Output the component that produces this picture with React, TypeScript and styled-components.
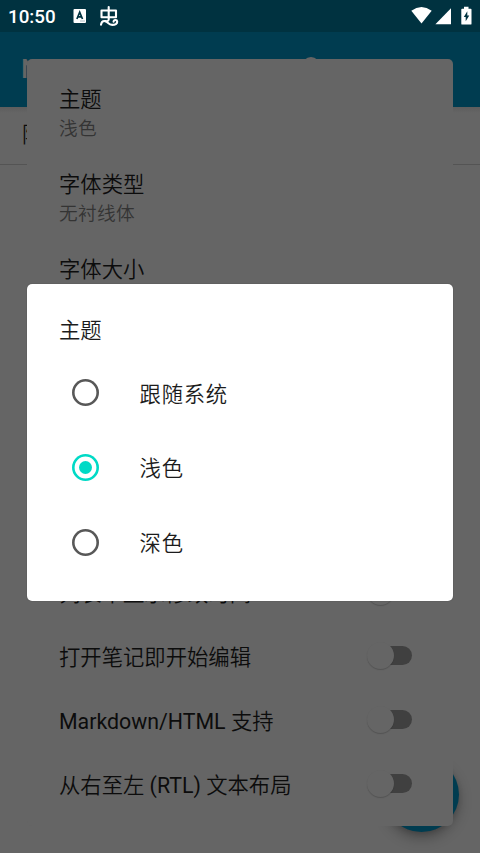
import React from 'react';
import styled, { createGlobalStyle } from 'styled-components';

const GlobalStyle = createGlobalStyle`
  * { box-sizing: border-box; }
  body { margin: 0; background: #656565; }
`;

const Screen = styled.div`
  position: relative;
  width: 480px;
  height: 853px;
  overflow: hidden;
  background: #656565;
  color: #0c0c0c;
  font-family: Roboto, 'Noto Sans CJK SC DemiLight', 'Noto Sans CJK SC', sans-serif;
  font-size: 21.33px;
`;

const StatusBar = styled.header`
  display: flex;
  align-items: center;
  height: 32px;
  padding: 0 8px 0 8px;
  background: #003240;
  color: #fff;
`;

const Clock = styled.span`
  width: 65px;
  font-size: 18.8px;
  font-weight: 500;
  line-height: 32px;
  padding-top: 1px;
`;

const StatusIcons = styled.svg`
  display: block;
  flex: none;
`;

const Spacer = styled.div`
  flex: 1;
`;

const AppBar = styled.div`
  height: 75px;
  padding: 19px 0 0 21px;
  background: #003c50;
  color: #656565;
  font-size: 26.6px;
  font-weight: 500;
  line-height: 36px;
  white-space: nowrap;
  display: flex;
`;

const AppTitle = styled.span`
  width: 274px;
`;

const SearchIcon = styled.svg`
  display: block;
  margin-top: 5px;
`;

const NoteRow = styled.div`
  height: 58px;
  padding: 11px 22px;
  border-bottom: 1px solid #545454;
  line-height: 34px;
  background: linear-gradient(#5d5d5d, #656565 6px);
`;

const Fab = styled.div`
  position: absolute;
  left: 384px;
  top: 757px;
  width: 75px;
  height: 75px;
  border-radius: 50%;
  background: #003c50;
  box-shadow: 0 6px 13px rgba(0, 0, 0, 0.28), 0 2px 5px rgba(0, 0, 0, 0.12);
`;

const Settings = styled.section`
  position: absolute;
  left: 27px;
  top: 59px;
  width: 426px;
  height: 767px;
  padding: 25px 40px 0 32px;
  border-radius: 5px;
  background: #656565;
  display: flex;
  flex-direction: column;
`;

const Preference = styled.div`
  height: 85.2px;
  flex: none;
`;

const PreferenceTitle = styled.div`
  line-height: 32px;
`;

const PreferenceValue = styled.div`
  color: #343434;
  font-size: 18.67px;
  letter-spacing: 0.33px;
  line-height: 27px;
`;

const Toggles = styled.div`
  margin-top: auto;
  padding-bottom: 8px;
`;

const ToggleRow = styled.div`
  display: flex;
  align-items: center;
  justify-content: space-between;
  height: 64px;
  line-height: 32px;
  white-space: nowrap;
`;

const Track = styled.div`
  display: flex;
  align-items: center;
  width: 37px;
  height: 19px;
  margin-right: 1px;
  margin-top: -5px;
  border-radius: 10px;
  background: #404040;
`;

const Thumb = styled.div`
  flex: none;
  width: 27px;
  height: 27px;
  margin-left: -8px;
  border-radius: 50%;
  background: #656565;
  box-shadow: 0 1px 1px rgba(0, 0, 0, 0.18);
`;

const Dialog = styled.section`
  position: absolute;
  left: 27px;
  top: 284px;
  width: 426px;
  height: 317px;
  padding: 31px 32px 0;
  border-radius: 5px;
  background: #fff;
  color: #1c1c1c;
  box-shadow: 0 0 1px #333;
`;

const DialogTitle = styled.h2`
  margin: 0 0 9px;
  font-size: 21.33px;
  font-weight: 400;
  line-height: 32px;
`;

const Option = styled.label`
  display: flex;
  align-items: center;
  height: 74.67px;
  padding-left: 12.6px;
  letter-spacing: 0.75px;
  gap: 41px;
`;

const Radio = styled.span<{ $on?: boolean }>`
  display: grid;
  place-items: center;
  width: 27px;
  height: 27px;
  margin-top: -1px;
  border-radius: 50%;
  box-shadow: inset 0 0 0 2.6px ${(p) => (p.$on ? '#00dac6' : '#585858')};

  &::after {
    content: '';
    width: 13px;
    height: 13px;
    border-radius: 50%;
    background: ${(p) => (p.$on ? '#00dac6' : 'transparent')};
  }
`;

const OptionText = styled.span`
  line-height: 32px;
  padding-top: 3px;
`;

const preferences = [
  { title: '主题', value: '浅色' },
  { title: '字体类型', value: '无衬线体' },
  { title: '字体大小', value: '' },
];

const toggles = [
  '列表中显示修改时间',
  '打开笔记即开始编辑',
  'Markdown/HTML 支持',
  '从右至左 (RTL) 文本布局',
];

const themes = ['跟随系统', '浅色', '深色'];

export default function App() {
  return (
    <>
      <GlobalStyle />
      <Screen>
        <StatusBar>
          <Clock>10:50</Clock>
          <StatusIcons width="48" height="32" viewBox="0 0 48 32">
            <rect x="0.5" y="9" width="12.5" height="14" rx="1" fill="#fff" />
            <path d="M3.9 19 6.7 12.2 9.5 19M5 16.8h3.5" fill="none" stroke="#003240" strokeWidth="1.7" />
            <path d="M7 21h5" stroke="#8aa2a9" strokeWidth="0.7" />
            <g fill="none" stroke="#fff" strokeWidth="2.1" strokeLinecap="round" strokeLinejoin="round">
              <path d="M28.5 10.500H43v6.700H28.500z" />
              <path d="M35.700 7v12.500c-.2 2.500-2.500 1.500-4.500 1.500-2 0-2.800 1.500-3.200 3.600" />
              <path d="M32 21.200c2.500 0 3.300 3.700 7.200 3.700 3 0 5.200-1.200 5-3.400-.2-2.100-3.800-1.800-3.600.2" />
            </g>
          </StatusIcons>
          <Spacer />
          <StatusIcons width="62" height="32" viewBox="410 0 62 32">
            <path d="M411.300 10.700Q421.500 3.500 431.700 10.700L421.500 23.500z" fill="#fff" />
            <path d="M451 8.300V24.300H435.400z" fill="#fff" />
            <path d="M464 6.800h4.500v1.900h2.200q.8 0 .8.800v14.200q0 .9-.8.900h-8.600q-.8 0-.8-.9V9.500q0-.8.8-.8h1.900z" fill="#fff" />
            <path d="M467.300 11.300 463.800 16.900h1.900V21.300L469.300 15.500h-2z" fill="#003240" />
          </StatusIcons>
        </StatusBar>
        <AppBar>
          <AppTitle>Notepad</AppTitle>
          <SearchIcon width="32" height="32" viewBox="0 0 32 32">
            <circle cx="16" cy="10" r="7.500" fill="none" stroke="#656565" strokeWidth="3" />
          </SearchIcon>
        </AppBar>
        <NoteRow>附</NoteRow>
        <Fab />
        <Settings>
          {preferences.map((p) => (
            <Preference key={p.title}>
              <PreferenceTitle>{p.title}</PreferenceTitle>
              <PreferenceValue>{p.value}</PreferenceValue>
            </Preference>
          ))}
          <Toggles>
            {toggles.map((label) => (
              <ToggleRow key={label}>
                {label}
                <Track>
                  <Thumb />
                </Track>
              </ToggleRow>
            ))}
          </Toggles>
        </Settings>
        <Dialog>
          <DialogTitle>主题</DialogTitle>
          {themes.map((name) => (
            <Option key={name}>
              <Radio $on={name === '浅色'} />
              <OptionText>{name}</OptionText>
            </Option>
          ))}
        </Dialog>
      </Screen>
    </>
  );
}
